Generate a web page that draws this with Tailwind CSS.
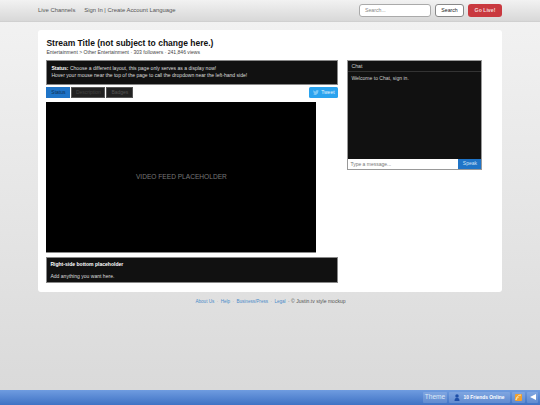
<!DOCTYPE html>
<html><head><meta charset="utf-8"><script src="https://cdn.jsdelivr.net/npm/@tailwindcss/browser@4"></script></head>
<body class="m-0 overflow-hidden">
<div class="w-[540px] h-[405px] flex flex-col font-['Liberation_Sans',Arial,sans-serif] bg-gradient-to-b from-[#f3f3f3] to-[#d9d9d9] overflow-hidden">
  <header class="h-[21px] shrink-0 flex items-center justify-between pl-[38px] pr-[38px] bg-gradient-to-b from-[#f2f2f2] to-[#d8d8d8] border-b border-[#d0d0d0] box-content">
    <nav class="flex text-[5.9px] text-[#555] gap-[9px]"><span>Live Channels</span><span>Sign In | Create Account Language</span></nav>
    <div class="flex items-center gap-[4px]">
      <div class="w-[72px] h-[12.5px] bg-white border border-[#aaa] rounded-[3px] text-[5.2px] text-[#888] flex items-center pl-[5px]">Search...</div>
      <div class="w-[29px] h-[12.5px] bg-white border border-[#888] rounded-[3px] text-[5.2px] text-[#222] flex items-center justify-center">Search</div>
      <div class="w-[34px] h-[12.5px] bg-[#c9393f] rounded-[3px] text-[5.2px] font-bold text-[#f5dcdc] flex items-center justify-center">Go Live!</div>
    </div>
  </header>
  <main class="mx-[38px] mt-[8px] h-[262px] shrink-0 bg-white rounded-[3px] px-[8.4px] pt-[8px] flex gap-[9px]">
    <section class="w-[292px] shrink-0 flex flex-col">
      <h1 class="text-[8.5px] leading-[11px] font-bold text-[#111]">Stream Title (not subject to change here.)</h1>
      <p class="text-[5.05px] leading-[7px] text-[#444]">Entertainment &gt; Other Entertainment · 303 followers · 241,846 views</p>
      <div class="mt-[4px] h-[25px] bg-[#111] border border-[#888] px-[4px] pt-[4px] text-[5.05px] leading-[6.5px] text-[#ddd]"><b class="text-white">Status:</b> Choose a different layout, this page only serves as a display now!<br>Hover your mouse near the top of the page to call the dropdown near the left-hand side!</div>
      <div class="mt-[2px] h-[11px] flex items-center gap-[1px] text-[5px]">
        <div class="w-[24px] h-[11px] bg-[#1f74c7] text-[#0f2f52] flex items-center justify-center">Status</div>
        <div class="w-[34px] h-[11px] bg-[#222] border border-[#555] text-[#444] flex items-center justify-center">Description</div>
        <div class="w-[27px] h-[11px] bg-[#222] border border-[#555] text-[#555] flex items-center justify-center">Badges</div>
        <div class="ml-auto w-[29px] h-[11px] rounded-[1.5px] bg-[#2aa3ef] text-[#e2f3fd] flex items-center justify-center gap-[2px]"><svg width="6" height="5" viewBox="0 0 24 20"><path fill="#7cc8f5" d="M24 2.4a10 10 0 0 1-2.8.8A5 5 0 0 0 23.3.5a10 10 0 0 1-3.1 1.2 4.9 4.9 0 0 0-8.4 4.5A14 14 0 0 1 1.7.9a4.9 4.9 0 0 0 1.5 6.6 5 5 0 0 1-2.2-.6 4.9 4.9 0 0 0 3.9 4.9 5 5 0 0 1-2.2.1 4.9 4.9 0 0 0 4.6 3.4A10 10 0 0 1 0 17.4 14 14 0 0 0 21.5 5a10 10 0 0 0 2.5-2.6z"/></svg>Tweet</div>
      </div>
      <div class="mt-[4px] w-[270px] h-[151px] bg-black border-b border-[#888] flex items-center justify-center text-[6.6px] text-[#777]">VIDEO FEED PLACEHOLDER</div>
      <div class="mt-[4px] h-[26px] bg-[#111] border border-[#888] px-[3px] pt-[3px] text-[5.05px] text-[#ddd]"><b class="block leading-[7px] text-white">Right-side bottom placeholder</b><p class="mt-[5px] leading-[7px]">Add anything you want here.</p></div>
    </section>
    <aside class="w-[135px] shrink-0 mt-[22px] h-[110px] flex flex-col border border-[#999] bg-[#111]">
      <div class="h-[11px] shrink-0 border-b border-[#333] px-[3px] text-[5.2px] leading-[11px] text-[#ccc]">Chat</div>
      <div class="flex-1 px-[3px] pt-[3px] text-[5.05px] text-[#ccc]">Welcome to Chat, sign in.</div>
      <div class="h-[10px] shrink-0 bg-white flex"><div class="flex-1 pl-[2px] text-[5px] leading-[10px] text-[#777]">Type a message...</div><div class="w-[23px] bg-[#1f74c7] text-[5px] text-[#cfe2f5] flex items-center justify-center">Speak</div></div>
    </aside>
  </main>
  <footer class="mt-[7px] h-[6px] flex justify-center items-center gap-[2.4px] text-[4.6px] text-[#999] pl-[1px]">
    <span class="text-[#4a8bc9]">About Us</span><span>·</span><span class="text-[#4a8bc9]">Help</span><span>·</span><span class="text-[#4a8bc9]">Business/Press</span><span>·</span><span class="text-[#4a8bc9]">Legal</span><span class="text-[#555] text-[5.05px]">· © Justin.tv style mockup</span>
  </footer>
  <div class="mt-auto h-[15.5px] shrink-0 bg-gradient-to-b from-[#6f9ce0] to-[#3f72c4] flex justify-end items-center gap-[2px] pr-[2px] text-white">
    <div class="h-[11.5px] w-[24px] bg-white/15 rounded-[1px] text-[6.6px] text-[#dfe8f7] flex items-center justify-center">Theme</div>
    <div class="h-[11.5px] w-[61px] bg-white/15 rounded-[1px] text-[4.9px] font-bold flex items-center justify-center gap-[3px]"><svg width="6" height="7" viewBox="0 0 12 14"><circle cx="6" cy="4" r="3.5" fill="#1e4fa8"/><path d="M1 14c0-5 2-6 5-6s5 1 5 6z" fill="#1e4fa8"/></svg>10 Friends Online</div>
    <div class="h-[11.5px] w-[13px] bg-white/15 rounded-[1px] flex items-center justify-center"><svg width="7" height="7" viewBox="0 0 7 7"><rect width="7" height="7" rx="1" fill="#f0a030"/><path d="M1 6a5 5 0 0 1 5-5M1 6a2.5 2.5 0 0 1 2.5-2.5" stroke="#fbe0a8" fill="none"/></svg></div>
    <div class="h-[11.5px] w-[11px] bg-white/15 rounded-[1px] flex items-center justify-center"><svg width="6" height="6" viewBox="0 0 6 6"><path d="M0 3 6 0v6z" fill="#fff"/></svg></div>
  </div>
</div>
</body></html>
